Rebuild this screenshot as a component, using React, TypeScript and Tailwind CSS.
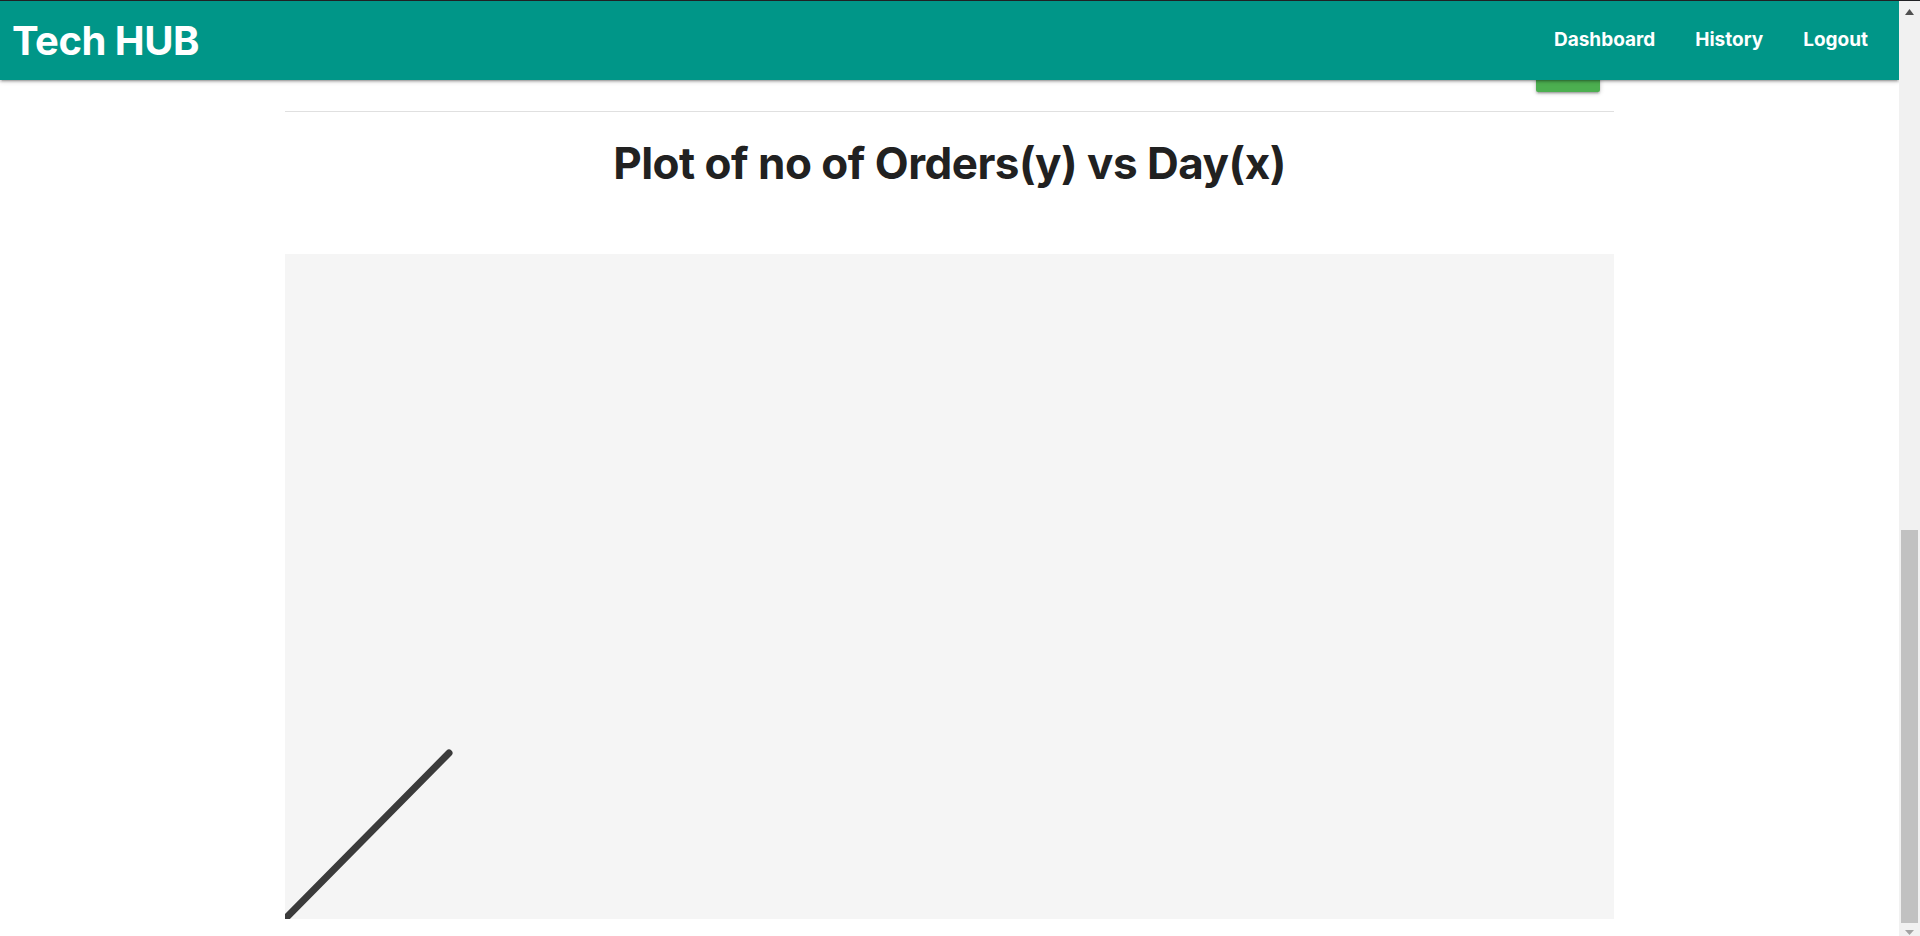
import React from 'react';

const font = { fontFamily: 'Inter, "Noto Sans", sans-serif' };

function NavBar() {
    return (
        <header
            className="relative z-10 flex h-[79px] shrink-0 items-center justify-between bg-[#009688] text-white shadow-[0_2px_2px_0_rgba(0,0,0,0.14),0_3px_1px_-2px_rgba(0,0,0,0.12),0_1px_5px_0_rgba(0,0,0,0.2)]"
        >
            <a className="pl-[12px] text-[40px] font-bold tracking-[-0.5px]">Tech HUB</a>
            <ul className="flex items-center pr-[11px] text-[19px] font-bold">
                <li className="px-[20px]">Dashboard</li>
                <li className="px-[20px]">History</li>
                <li className="px-[20px]">Logout</li>
            </ul>
        </header>
    );
}

// scrollbar of the browser window, page is scrolled to the bottom
function ScrollBar() {
    return (
        <div className="flex w-[21px] shrink-0 flex-col bg-[#f1f1f1]">
            <div className="flex h-[20px] shrink-0 items-start justify-center pt-[8px]">
                <svg width="9" height="6" viewBox="0 0 9 6">
                    <polygon points="4.5,0 9,6 0,6" fill="#505050" />
                </svg>
            </div>
            <div className="h-[509px] shrink-0" />
            <div className="mx-[2px] h-[393px] shrink-0 bg-[#c1c1c1]" />
            <div className="flex flex-1 justify-center pt-[7px]">
                <svg width="9" height="5" viewBox="0 0 9 5">
                    <polygon points="0,0 9,0 4.5,5" fill="#a3a3a3" />
                </svg>
            </div>
        </div>
    );
}

function OrdersPlot() {
    return (
        <div className="h-[665px] w-full shrink-0 overflow-hidden bg-[#f5f5f5]">
            <svg width="100%" height="665" className="block">
                <line x1="-3" y1="668" x2="164" y2="499" stroke="#3b3b3b" strokeWidth="7" strokeLinecap="round" />
            </svg>
        </div>
    );
}

export default function App() {
    return (
        <div className="flex h-screen w-full flex-col overflow-hidden bg-white" style={font}>
            <div className="h-px shrink-0 bg-[#202124]" />
            <div className="flex min-h-0 flex-1">
                <div className="flex min-w-0 flex-1 flex-col overflow-hidden">
                    <NavBar />
                    <main className="mx-auto flex w-[70%] flex-col">
                        {/* leftover of the form above, mostly under the navbar */}
                        <div className="-mt-[33px] flex justify-end pr-[14px]">
                            <button className="h-[45px] w-[64px] rounded-[2px] bg-[#4caf50] shadow-[0_2px_2px_0_rgba(0,0,0,0.14),0_3px_1px_-2px_rgba(0,0,0,0.12),0_1px_5px_0_rgba(0,0,0,0.2)]" />
                        </div>
                        <hr className="mt-[19px] border-t border-[#e0e0e0]" />
                        <h4 className="mt-[26px] mb-[66px] text-center text-[44px] font-bold leading-[50px] tracking-[-0.5px] text-[#212121]">
                            Plot of no of Orders(y) vs Day(x)
                        </h4>
                        <OrdersPlot />
                    </main>
                </div>
                <ScrollBar />
            </div>
        </div>
    );
}
